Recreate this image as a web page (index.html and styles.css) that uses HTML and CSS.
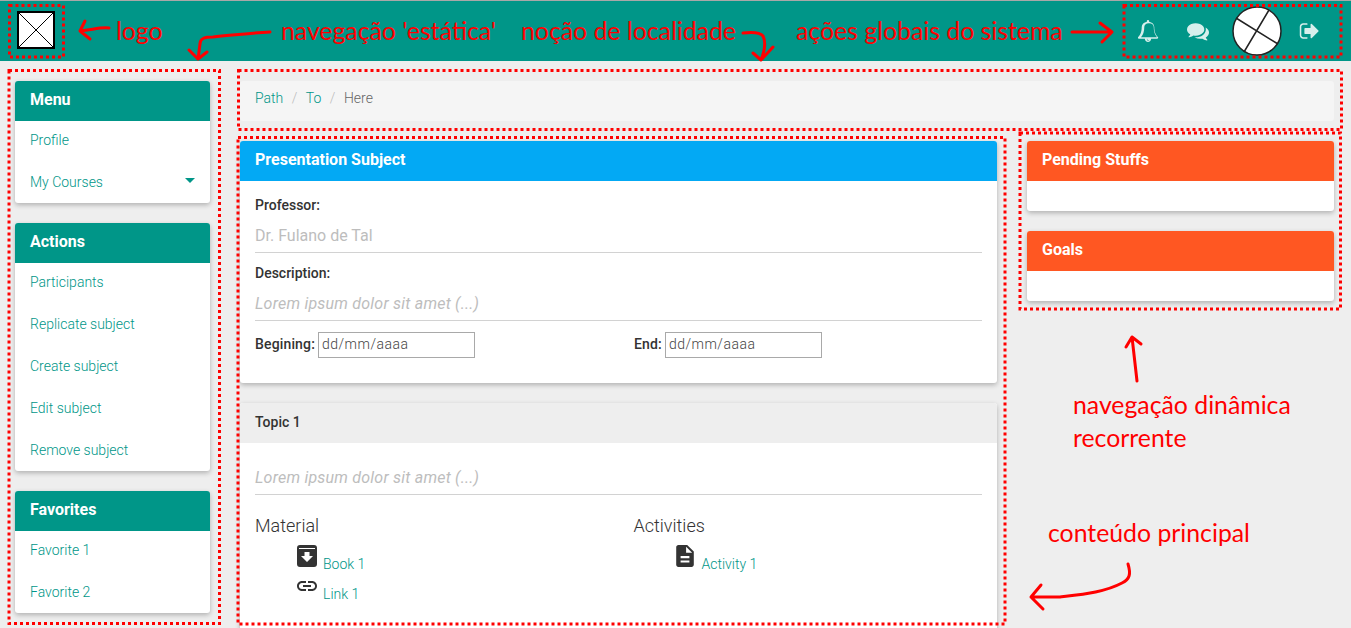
FILE: index.html
```html
<!DOCTYPE html>
<html lang="en">

<head>
    <meta charset="UTF-8">
    <meta name="viewport" content="width=device-width, initial-scale=1.0">
    <title>Presentation Subject</title>
    <link rel="stylesheet" href="styles.css">
</head>

<body>
    <header class="topbar">
        <svg class="logo" viewBox="0 0 38 38">
            <rect x="1" y="1" width="36" height="36" fill="#fff" stroke="#000" stroke-width="2"/>
            <path d="M1 1L37 37M37 1L1 37" stroke="#000" stroke-width="1" fill="none"/>
        </svg>
        <nav class="top-actions">
            <svg class="top-icon bell" viewBox="0 0 1792 1792"><path d="M912 1696q0-16-16-16-59 0-101.5-42.5t-42.5-101.5q0-16-16-16t-16 16q0 73 51.5 124.5t124.5 51.5q16 0 16-16zm-666-288h1300q-266-300-266-832 0-51-24-105t-69-103-121.5-80.5-169.5-31.5-169.5 31.5-121.5 80.5-69 103-24 105q0 532-266 832zm1400 0q0 52-38 90t-90 38h-448q0 106-75 181t-181 75-181-75-75-181h-448q-52 0-90-38t-38-90q50-42 91-88t85-119.5 74.5-158.5 50-206 19.5-260q0-152 117-282.5t307-158.5q-8-19-8-39 0-40 28-68t68-28 68 28 28 68q0 20-8 39 190 28 307 158.5t117 282.5q0 139 19.5 260t50 206 74.5 158.5 85 119.5 91 88z"/></svg>
            <svg class="top-icon comments" viewBox="0 0 1792 1792"><path d="M1408 768q0 139-94 257t-256.5 186.5-353.5 68.5q-86 0-176-16-124 88-278 128-36 9-86 16h-3q-11 0-20.5-8t-11.5-21q-1-3-1-6.5t.5-6.5 2-6l2.5-5 3.5-5.5 4-5 4.5-5 4-4.5q5-6 23-25t26-29.5 22.5-29 25-38.5 20.5-44q-124-72-195-177t-71-224q0-139 94-257t256.5-186.5 353.5-68.5 353.5 68.5 256.5 186.5 94 257zm384 256q0 120-71 224.5t-195 176.5q10 24 20.5 44t25 38.5 22.5 29 26 29.5 23 25q1 1 4 4.5t4.5 5 4 5 3.5 5.5l2.5 5 2 6 .5 6.5-1 6.5q-3 14-13 22t-22 7q-50-7-86-16-154-40-278-128-90 16-176 16-271 0-472-132 58 4 88 4 161 0 309-45t264-129q125-92 192-212t67-254q0-77-23-152 129 71 204 178t75 230z"/></svg>
            <svg class="avatar" viewBox="0 0 50 50">
                <circle cx="25" cy="25" r="24" fill="#fff" stroke="#222" stroke-width="1.500"/>
                <path d="M4 12L46 38M37 4L12 46" stroke="#222" stroke-width="1.500" fill="none"/>
            </svg>
            <svg class="top-icon signout" viewBox="0 0 1664 1792"><path d="M704 1440q0 4 1 20t.5 26.5-3 23.5-10 19.5-20.5 6.5h-320q-119 0-203.5-84.5t-84.5-203.5v-704q0-119 84.5-203.5t203.5-84.5h320q13 0 22.5 9.5t9.5 22.5q0 4 1 20t.5 26.5-3 23.5-10 19.5-20.5 6.5h-320q-66 0-113 47t-47 113v704q0 66 47 113t113 47h312l11.5 1 11.5 3 8 5.5 7 9 2 13.5zm928-544q0 26-19 45l-544 544q-19 19-45 19t-45-19-19-45v-288h-448q-26 0-45-19t-19-45v-384q0-26 19-45t45-19h448v-288q0-26 19-45t45-19 45 19l544 544q19 19 19 45z"/></svg>
        </nav>
    </header>

    <div class="page">
        <aside class="sidebar">
            <section class="card">
                <h2 class="card-title teal">Menu</h2>
                <ul class="menu">
                    <li><a href="#">Profile</a></li>
                    <li><a href="#">My Courses<span class="caret"></span></a></li>
                </ul>
            </section>
            <section class="card">
                <h2 class="card-title teal">Actions</h2>
                <ul class="menu">
                    <li><a href="#">Participants</a></li>
                    <li><a href="#">Replicate subject</a></li>
                    <li><a href="#">Create subject</a></li>
                    <li><a href="#">Edit subject</a></li>
                    <li><a href="#">Remove subject</a></li>
                </ul>
            </section>
            <section class="card">
                <h2 class="card-title teal">Favorites</h2>
                <ul class="menu">
                    <li><a href="#">Favorite 1</a></li>
                    <li><a href="#">Favorite 2</a></li>
                </ul>
            </section>
        </aside>

        <div class="content">
            <ol class="breadcrumb">
                <li><a href="#">Path</a></li>
                <li class="sep">/</li>
                <li><a href="#">To</a></li>
                <li class="sep">/</li>
                <li class="current">Here</li>
            </ol>

            <div class="columns">
                <main class="main-col">
                    <section class="card">
                        <h2 class="card-title blue">Presentation Subject</h2>
                        <div class="subject-body">
                            <div class="field-label">Professor:</div>
                            <div class="field-value">Dr. Fulano de Tal</div>
                            <div class="field-label">Description:</div>
                            <div class="field-value lorem">Lorem ipsum dolor sit amet (...)</div>
                            <div class="dates">
                                <label class="date-label">Begining: <input class="date-input" type="text" value="dd/mm/aaaa"></label>
                                <label class="date-label">End: <input class="date-input" type="text" value="dd/mm/aaaa"></label>
                            </div>
                        </div>
                    </section>

                    <section class="card topic">
                        <h3 class="topic-title">Topic 1</h3>
                        <div class="topic-body">
                            <div class="field-value lorem">Lorem ipsum dolor sit amet (...)</div>
                        </div>
                        <div class="resources">
                            <div class="resource-col">
                                <h4 class="resource-title">Material</h4>
                                <div class="resource">
                                    <svg class="resource-icon" viewBox="0 0 20 22"><path fill-rule="evenodd" d="M3 0h14a3 3 0 0 1 3 3v16a3 3 0 0 1-3 3H3a3 3 0 0 1-3-3V3a3 3 0 0 1 3-3zM2 3v1h16V3zM7.500 7v4H4l6 6 6-6h-3.500V7z"/></svg>
                                    <a href="#">Book 1</a>
                                </div>
                                <div class="resource">
                                    <svg class="resource-icon" viewBox="2 6 20 12"><path d="M3.900 12c0-1.710 1.390-3.100 3.100-3.100h4V7H7c-2.760 0-5 2.240-5 5s2.240 5 5 5h4v-1.900H7c-1.710 0-3.100-1.390-3.100-3.100zM8 13h8v-2H8v2zm9-6h-4v1.900h4c1.710 0 3.100 1.390 3.100 3.100s-1.390 3.100-3.100 3.100h-4V17h4c2.760 0 5-2.240 5-5s-2.240-5-5-5z"/></svg>
                                    <a href="#">Link 1</a>
                                </div>
                            </div>
                            <div class="resource-col">
                                <h4 class="resource-title">Activities</h4>
                                <div class="resource">
                                    <svg class="resource-icon doc" viewBox="4 2 16 20"><path d="M14 2H6c-1.100 0-1.990.9-1.990 2L4 20c0 1.100.89 2 1.990 2H18c1.100 0 2-.9 2-2V8l-6-6zm2 16H8v-2h8v2zm0-4H8v-2h8v2zm-3-5V3.500L18.500 9H13z"/></svg>
                                    <a href="#">Activity 1</a>
                                </div>
                            </div>
                        </div>
                    </section>
                </main>

                <aside class="side-col">
                    <section class="card">
                        <h2 class="card-title orange">Pending Stuffs</h2>
                        <div class="card-empty"></div>
                    </section>
                    <section class="card">
                        <h2 class="card-title orange">Goals</h2>
                        <div class="card-empty"></div>
                    </section>
                </aside>
            </div>
        </div>
    </div>

    <!-- annotations drawn over the page -->
    <svg class="marks" viewBox="0 0 1351 628">
        <g class="dots">
            <rect x="9.500" y="5.500" width="54" height="51.500"/>
            <rect x="1124" y="5.500" width="217" height="51.500"/>
            <rect x="9" y="70.500" width="210.500" height="553"/>
            <rect x="238.500" y="70.500" width="1103" height="59"/>
            <rect x="238" y="137.500" width="767" height="486.500"/>
            <rect x="1020" y="133" width="320.500" height="176"/>
        </g>
        <g class="arrows">
            <path d="M109 28C100 27 92 30 80 31M85 21L80 31L90 39"/>
            <path d="M270 32C250 33 235 35 213 37C205 37 200 38 200 44L198 59M189 50L198 59L207 52"/>
            <path d="M743 33C752 32 760 32 763 36C766 42 765 50 761 60M753 53L761 60L773 47"/>
            <path d="M1072 32H1112M1100 23L1112 32L1102 42"/>
            <path d="M1137 381L1132 337M1126 347L1132 337L1141 344"/>
            <path d="M1128 564C1131 574 1130 579 1122 583C1105 592 1085 594 1060 597L1031 597M1041 585L1031 597L1043 609"/>
        </g>
    </svg>
    <span class="note note-logo">logo</span>
    <span class="note note-static">navegação 'estática'</span>
    <span class="note note-place">noção de localidade</span>
    <span class="note note-global">ações globais do sistema</span>
    <span class="note note-dynamic">navegação dinâmica<br>recorrente</span>
    <span class="note note-main">conteúdo principal</span>
</body>

</html>
```

FILE: styles.css
```css
html,
body {
    height: 100%;
}

body {
    margin: 0;
    overflow: hidden;
    position: relative;
    font-family: Roboto, Arial, sans-serif;
    font-size: 14px;
    color: #333;
    background-color: #eeeeee;
}

a {
    color: #009688;
    text-decoration: none;
}

/* top bar */
.topbar {
    height: 60px;
    border-top: 1px solid #a8a8a8;
    background-color: #009688;
    display: flex;
    align-items: center;
    justify-content: space-between;
    padding: 0 32px 0 17px;
}

.logo {
    width: 38px;
    height: 38px;
    margin-top: -2px;
}

.top-actions {
    display: flex;
    align-items: center;
}

.top-icon {
    fill: #d6efec;
}

.bell {
    width: 22px;
    height: 22px;
    margin-right: 27px;
}

.comments {
    width: 22px;
    height: 22px;
    margin-right: 23px;
}

.avatar {
    width: 50px;
    height: 50px;
    margin-right: 17px;
}

.signout {
    width: 20px;
    height: 22px;
}

/* page columns */
.page {
    display: flex;
    gap: 30px;
    padding: 20px 17px 0 15px;
}

.sidebar {
    width: 195px;
    flex: none;
    display: flex;
    flex-direction: column;
    gap: 20px;
}

.content {
    flex: 1;
}

.columns {
    display: flex;
    gap: 30px;
    margin-top: 20px;
}

.main-col {
    width: 757px;
    display: flex;
    flex-direction: column;
    gap: 20px;
}

.side-col {
    flex: 1;
    display: flex;
    flex-direction: column;
    gap: 20px;
}

/* cards */
.card {
    background-color: #fff;
    border-radius: 3px;
    box-shadow: 0 2px 5px rgba(0, 0, 0, 0.26);
}

.card-title {
    margin: 0;
    height: 40px;
    line-height: 38px;
    padding: 0 15px;
    font-size: 16px;
    font-weight: 700;
    color: #fff;
    border-radius: 3px 3px 0 0;
}

.teal {
    background-color: #009688;
}

.blue {
    background-color: #03a9f4;
}

.orange {
    background-color: #ff5722;
}

.card-empty {
    height: 30px;
}

/* side menu */
.menu {
    list-style: none;
    margin: 0;
    padding: 0;
}

.menu li + li {
    margin-top: 2px;
}

.menu a {
    display: flex;
    align-items: center;
    justify-content: space-between;
    height: 38px;
    padding: 0 15px 2px;
    font-size: 14px;
    font-weight: 300;
}

.caret {
    width: 0;
    height: 0;
    border-left: 5px solid transparent;
    border-right: 5px solid transparent;
    border-top: 5px solid #009688;
    margin-bottom: 3px;
}

/* breadcrumb */
.breadcrumb {
    list-style: none;
    margin: 0;
    height: 34px;
    padding: 0 15px 6px;
    display: flex;
    align-items: center;
    gap: 8.500px;
    font-size: 14px;
    font-weight: 300;
    color: #666;
    background-color: #f5f5f5;
    border-radius: 3px;
}

.sep {
    color: #bbb;
}

/* subject card */
.subject-body {
    height: 202px;
    box-sizing: border-box;
    padding: 15px 15px 0;
}

.field-label {
    font-size: 14px;
    font-weight: 500;
    line-height: 18px;
}

.field-value {
    margin-top: 8px;
    height: 30px;
    line-height: 28px;
    margin-bottom: 11px;
    font-size: 16px;
    font-weight: 400;
    color: #bdbdbd;
    border-bottom: 1px solid #d2d2d2;
}

.lorem {
    font-style: italic;
    letter-spacing: 0.22px;
}

.dates {
    display: grid;
    grid-template-columns: 379px 1fr;
}

.date-label {
    display: flex;
    align-items: center;
    gap: 3px;
    font-weight: 500;
    letter-spacing: 0.15px;
}

.date-input {
    width: 157px;
    height: 26px;
    margin-bottom: -2px;
    box-sizing: border-box;
    padding: 0 3px 2px;
    border: 1px solid #a9a9a9;
    font-family: Roboto, Arial, sans-serif;
    font-size: 14px;
    font-weight: 300;
    letter-spacing: 0.5px;
    color: #444;
}

/* topic card */
.topic {
    height: 240px;
    border-radius: 3px 3px 0 0;
}

.topic-title {
    margin: 0;
    height: 40px;
    line-height: 38px;
    padding: 0 15px;
    font-size: 14px;
    font-weight: 500;
    background-color: #eeeeee;
    border-radius: 3px 3px 0 0;
}

.topic-body {
    padding: 13px 15px 0;
}

.resources {
    display: grid;
    grid-template-columns: 1fr 1fr;
    margin-top: 19px;
}

.resource-col {
    padding-left: 15px;
}

.resource-title {
    margin: 0 0 10px;
    font-size: 18px;
    font-weight: 300;
    line-height: 24px;
}

.resource {
    display: flex;
    align-items: flex-start;
    height: 30px;
    padding-left: 42px;
    font-weight: 300;
}

.resource a {
    margin-left: 6px;
    margin-top: 8px;
}

.resource-icon {
    width: 20px;
    height: 22px;
    fill: #333;
    margin-top: -3px;
}

.doc {
    width: 18px;
    height: 22px;
    margin-right: 2px;
    margin-left: 0;
}

/* red annotations */
.marks {
    position: absolute;
    top: 0;
    left: 0;
    width: 1351px;
    height: 628px;
    pointer-events: none;
}

.dots rect {
    fill: none;
    stroke: #f00;
    stroke-width: 3;
    stroke-dasharray: 3 3;
}

.arrows path {
    fill: none;
    stroke: #f00;
    stroke-width: 3;
    stroke-linecap: round;
    stroke-linejoin: round;
}

.note {
    position: absolute;
    font-family: Lato, "Open Sans", sans-serif;
    font-size: 24.800px;
    line-height: 33px;
    color: #f00;
    white-space: nowrap;
}

.note-logo {
    left: 116px;
    top: 14px;
}

.note-static {
    left: 281px;
    top: 14px;
}

.note-place {
    left: 521px;
    top: 14px;
}

.note-global {
    left: 796px;
    top: 14px;
}

.note-dynamic {
    left: 1073px;
    top: 388px;
}

.note-main {
    left: 1048px;
    top: 516px;
}
```
